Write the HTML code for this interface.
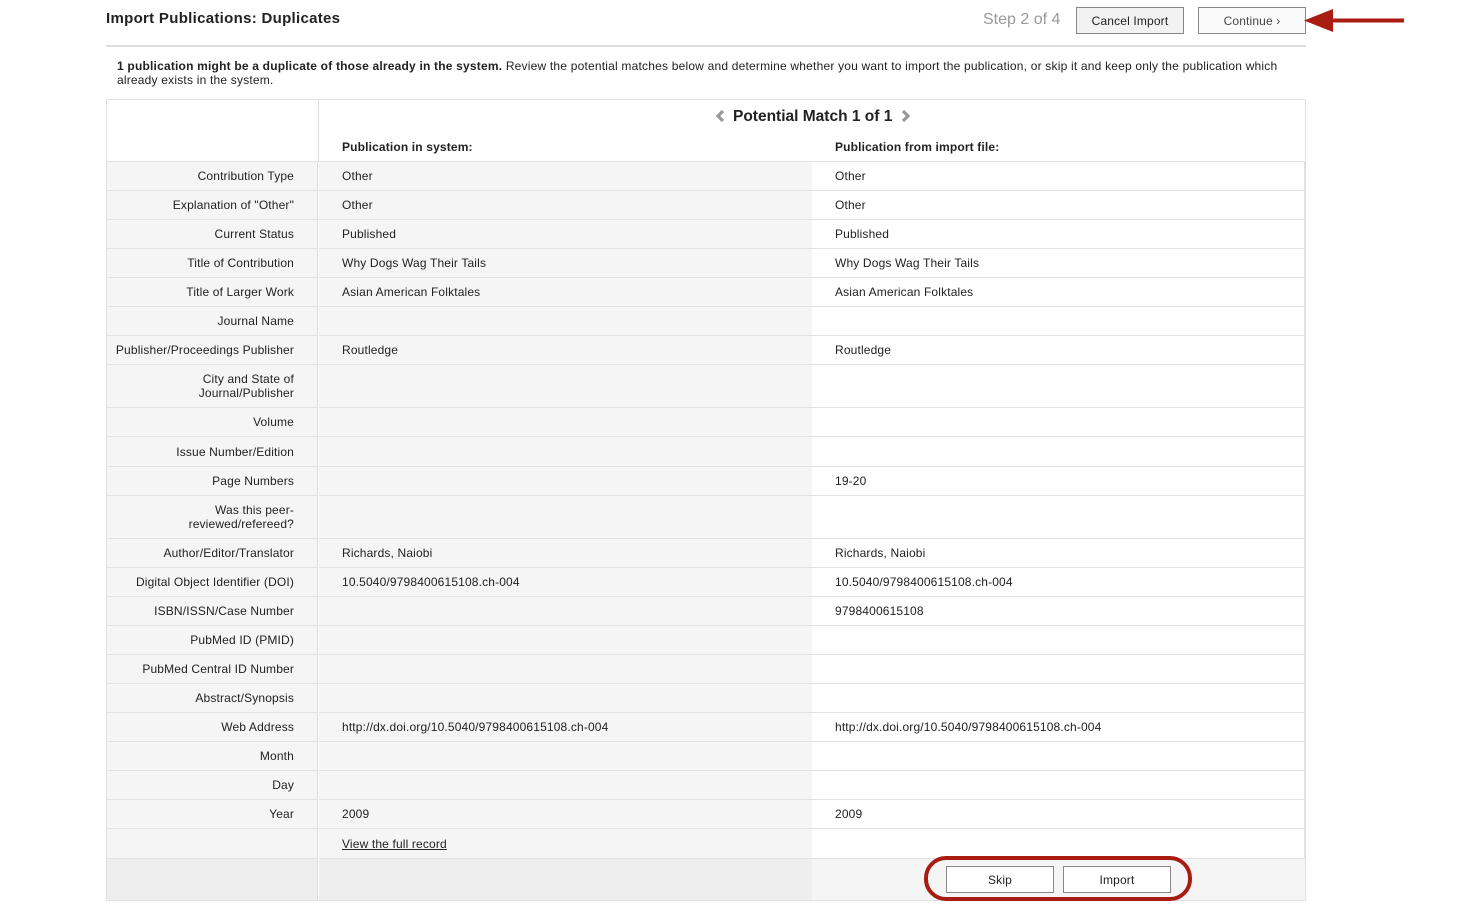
<!DOCTYPE html>
<html><head><meta charset="utf-8">
<style>
*{box-sizing:border-box;margin:0;padding:0}
body{width:1457px;height:915px;background:#fff;font-family:"Liberation Sans",Arial,sans-serif;color:#222;position:relative;overflow:hidden;font-size:12px;letter-spacing:0.15px}
.a{position:absolute}
.cell{position:absolute;display:flex;align-items:center;border-bottom:1px solid #e2e2e2;font-size:12px;color:#222;line-height:14px}
.lab{left:107px;width:211px;background:#f5f5f5;justify-content:flex-end;text-align:right;padding-right:23px;border-right:1px solid #dcdcdc}
.sys{left:319px;width:493px;background:#f5f5f5;padding-left:23px}
.imp{left:812px;width:493px;background:#fff;padding-left:23px;border-right:1px solid #e2e2e2}
.btn{position:absolute;border:1px solid #888;background:#f2f2f2;font-size:12px;display:flex;align-items:center;justify-content:center;color:#222}
</style></head><body>
<div class="a" style="left:106px;top:10px;font-size:15px;font-weight:bold;color:#222;letter-spacing:0.3px">Import Publications: Duplicates</div>
<div class="a" style="left:983px;top:11px;font-size:16px;color:#999;letter-spacing:0">Step 2 of 4</div>
<div class="btn" style="left:1076px;top:7px;width:108px;height:27px">Cancel Import</div>
<div class="btn" style="left:1198px;top:7px;width:108px;height:27px;background:#fafafa;color:#444">Continue ›</div>
<svg class="a" style="left:1300px;top:6px" width="110" height="30"><path d="M104 14.5 H30" stroke="#a81c12" stroke-width="4"/><path d="M4 14.5 L33 3 L33 26 Z" fill="#a81c12"/></svg>
<div class="a" style="left:106px;top:45px;width:1200px;height:2px;background:#ddd"></div>
<div class="a" style="left:117px;top:59px;width:1180px;font-size:12px;line-height:14px;color:#222;letter-spacing:0.2px"><b>1 publication might be a duplicate of those already in the system.</b> Review the potential matches below and determine whether you want to import the publication, or skip it and keep only the publication which already exists in the system.</div>
<div class="a" style="left:106px;top:99px;width:1200px;height:802px;border:1px solid #e2e2e2"></div>
<div class="a" style="left:318px;top:100px;width:1px;height:61px;background:#dcdcdc"></div>
<div class="a" style="left:106px;top:161px;width:1200px;height:1px;background:#e2e2e2"></div>
<svg class="a" style="left:714px;top:109px" width="12" height="14"><path d="M9 2 L4 7 L9 12" stroke="#999" stroke-width="3.2" fill="none"/></svg>
<div class="a" style="left:733px;top:108px;font-size:15.5px;font-weight:bold;color:#222;letter-spacing:0">Potential Match 1 of 1</div>
<svg class="a" style="left:900px;top:109px" width="12" height="14"><path d="M3 2 L8 7 L3 12" stroke="#999" stroke-width="3.2" fill="none"/></svg>
<div class="a" style="left:342px;top:140px;font-weight:bold;font-size:12px">Publication in system:</div>
<div class="a" style="left:835px;top:140px;font-weight:bold;font-size:12px">Publication from import file:</div>
<div id="rows"></div>
<script>
var R=[["Contribution Type",162,29,"Other","Other"],["Explanation of \"Other\"",191,29,"Other","Other"],["Current Status",220,29,"Published","Published"],["Title of Contribution",249,29,"Why Dogs Wag Their Tails","Why Dogs Wag Their Tails"],["Title of Larger Work",278,29,"Asian American Folktales","Asian American Folktales"],["Journal Name",307,29,"",""],["Publisher/Proceedings Publisher",336,29,"Routledge","Routledge"],["City and State of<br>Journal/Publisher",365,43,"",""],["Volume",408,29,"",""],["Issue Number/Edition",437,30,"",""],["Page Numbers",467,29,"","19-20"],["Was this peer-<br>reviewed/refereed?",496,43,"",""],["Author/Editor/Translator",539,29,"Richards, Naiobi","Richards, Naiobi"],["Digital Object Identifier (DOI)",568,29,"10.5040/9798400615108.ch-004","10.5040/9798400615108.ch-004"],["ISBN/ISSN/Case Number",597,29,"","9798400615108"],["PubMed ID (PMID)",626,29,"",""],["PubMed Central ID Number",655,29,"",""],["Abstract/Synopsis",684,29,"",""],["Web Address",713,29,"http://dx.doi.org/10.5040/9798400615108.ch-004","http://dx.doi.org/10.5040/9798400615108.ch-004"],["Month",742,29,"",""],["Day",771,29,"",""],["Year",800,29,"2009","2009"],["",829,30,"<u>View the full record</u>",""]];
var h="";R.forEach(function(r){var s="top:"+r[1]+"px;height:"+r[2]+"px";h+='<div class="cell lab" style="'+s+'">'+r[0]+'</div><div class="cell sys" style="'+s+'">'+r[3]+'</div><div class="cell imp" style="'+s+'">'+r[4]+'</div>';});
document.getElementById("rows").innerHTML=h;
</script>
<div class="a" style="left:107px;top:859px;width:211px;height:41px;background:#eee;border-right:1px solid #dcdcdc"></div>
<div class="a" style="left:319px;top:859px;width:493px;height:41px;background:#eee"></div>
<div class="a" style="left:812px;top:859px;width:493px;height:41px;background:#f5f5f5"></div>
<div class="btn" style="left:946px;top:866px;width:108px;height:27px;background:#fff">Skip</div>
<div class="btn" style="left:1063px;top:866px;width:108px;height:27px;background:#fff">Import</div>
<div class="a" style="left:924px;top:856px;width:268px;height:45px;border:4px solid #a81c12;border-radius:22px"></div>
</body></html>
